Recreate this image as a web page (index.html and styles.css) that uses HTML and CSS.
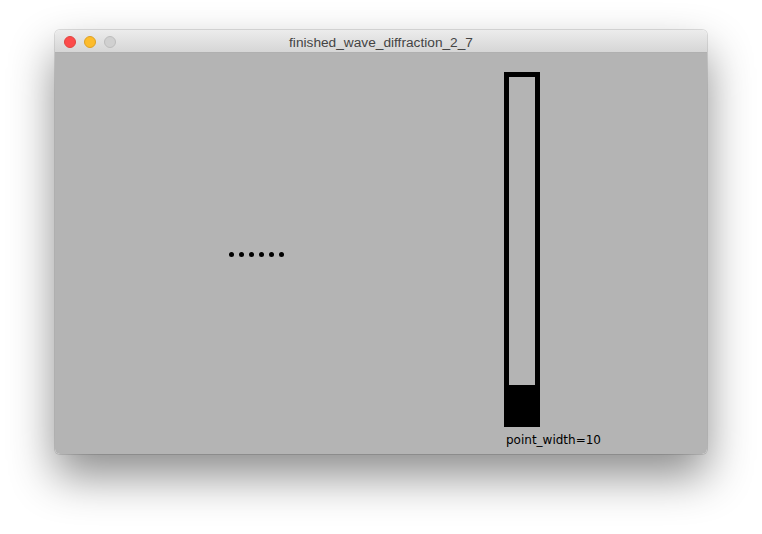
FILE: index.html
```html
<!DOCTYPE html>
<html>
<head>
<meta charset="utf-8">
<link rel="stylesheet" href="styles.css">
</head>
<body>
<div class="window">
  <div class="titlebar">
    <div class="lights">
      <span class="light red"></span>
      <span class="light yellow"></span>
      <span class="light gray"></span>
    </div>
    <div class="title">finished_wave_diffraction_2_7</div>
  </div>
  <div class="canvas">
    <div class="dots">
      <span class="dot"></span><span class="dot"></span><span class="dot"></span><span class="dot"></span><span class="dot"></span><span class="dot"></span>
    </div>
    <div class="slider">
      <div class="track">
        <div class="fill" style="height:37px"></div>
      </div>
      <div class="label">point_width=10</div>
    </div>
  </div>
</div>
</body>
</html>
```
FILE: styles.css
```css
html, body { margin: 0; padding: 0; }
body {
  background: #ffffff;
  width: 762px;
  height: 534px;
  overflow: hidden;
  padding: 30px 0 0 55px;
  box-sizing: border-box;
}
.window {
  width: 652px;
  height: 424px;
  border-radius: 5px;
  overflow: hidden;
  box-shadow: 0 22px 45px rgba(0,0,0,0.45), 0 0 0 1px rgba(0,0,0,0.12);
  display: flex;
  flex-direction: column;
}
.titlebar {
  height: 23px;
  flex: none;
  background: linear-gradient(#ececec, #d6d6d6);
  border-bottom: 1px solid #b0b0b0;
  box-sizing: border-box;
  position: relative;
  display: flex;
  align-items: center;
  justify-content: center;
}
.lights {
  position: absolute;
  left: 9px;
  top: 6px;
  display: flex;
  gap: 8px;
}
.light {
  width: 12px;
  height: 12px;
  border-radius: 50%;
  box-sizing: border-box;
}
.red { background: #fc4b4b; border: 1px solid #e0443e; }
.yellow { background: #fdbc2c; border: 1px solid #dea123; }
.gray { background: #d0d0d0; border: 1px solid #bdbdbd; }
.title {
  font-family: "Liberation Sans", Arial, sans-serif;
  font-size: 13.7px;
  color: #444444;
  margin-top: 2px;
}
.canvas {
  flex: 1;
  background: #b4b4b4;
  position: relative;
}
.dots {
  position: absolute;
  left: 174px;
  top: 199px;
  display: flex;
  gap: 5px;
}
.dot {
  width: 5px;
  height: 5px;
  border-radius: 50%;
  background: #000;
}
.slider {
  position: absolute;
  left: 449px;
  top: 19px;
  display: flex;
  flex-direction: column;
}
.track {
  width: 36px;
  height: 355px;
  box-sizing: border-box;
  border: 5px solid #000;
  display: flex;
  flex-direction: column;
  justify-content: flex-end;
}
.fill { background: #000; }
.label {
  font-family: "DejaVu Sans", sans-serif;
  font-size: 12px;
  color: #000;
  margin-left: 2px;
  margin-top: 6px;
  line-height: 14px;
}
```
